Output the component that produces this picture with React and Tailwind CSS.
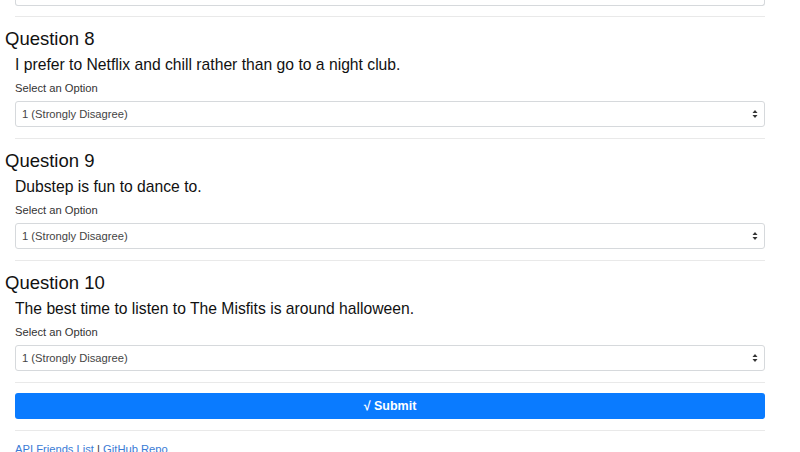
import { useState } from 'react';

const questions = [
  { n: 8, text: 'I prefer to Netflix and chill rather than go to a night club.' },
  { n: 9, text: 'Dubstep is fun to dance to.' },
  { n: 10, text: 'The best time to listen to The Misfits is around halloween.' },
];

function Arrows() {
  return (
    <svg width="6" height="10" viewBox="0 0 6 10" className="shrink-0">
      <path d="M3 1 L5.5 4 L0.5 4 Z" fill="#333" />
      <path d="M3 9 L5.5 6 L0.5 6 Z" fill="#333" />
    </svg>
  );
}

function Question({ q, value, onChange }) {
  return (
    <div>
      <div className="mx-[15px] h-px bg-[#e9e9e9]" />
      <div className="mt-[10px] pl-[5px] text-[18.5px] leading-[24px] text-[#111]">Question {q.n}</div>
      <div className="px-[15px]">
        <div className="mt-[4px] text-[15.7px] leading-[20px] text-[#111]">{q.text}</div>
        <div className="mt-[6px] text-[11.2px] leading-[14px] text-[#333]">Select an Option</div>
        <label className="relative mt-[6px] flex h-[26px] items-center rounded-[3px] border border-[#d6d9dc] bg-white pl-[6px] pr-[6px]">
          <span className="flex-1 text-[11.2px] text-[#444]">{value}</span>
          <Arrows />
          <select value={value} onChange={e => onChange(e.target.value)} className="absolute inset-0 opacity-0">
            <option>1 (Strongly Disagree)</option>
            <option>2</option>
            <option>3</option>
            <option>4</option>
            <option>5 (Strongly Agree)</option>
          </select>
        </label>
      </div>
      <div className="h-[11px]" />
    </div>
  );
}

export default function App() {
  const [answers, setAnswers] = useState({});
  return (
    <div className="h-[452px] w-[800px] overflow-hidden bg-white font-['Liberation_Sans',Arial,sans-serif]">
      <div className="w-[780px]">
        <div className="mx-[15px] h-[6px] rounded-b-[3px] border border-t-0 border-[#d6d9dc]" />
        <div className="h-[10px]" />
        {questions.map(q => (
          <Question key={q.n} q={q} value={answers[q.n] || '1 (Strongly Disagree)'}
            onChange={v => setAnswers(a => ({ ...a, [q.n]: v }))} />
        ))}
        <div className="px-[15px]">
          <div className="h-px bg-[#e9e9e9]" />
          <button className="mt-[10px] flex h-[26px] w-full items-center justify-center rounded-[3px] bg-[#0a7bff] text-[12.5px] font-bold text-white">
            √ Submit
          </button>
          <div className="mt-[11px] h-px bg-[#e9e9e9]" />
          <div className="mt-[11px] text-[11.2px] leading-[14px] text-[#3a7bd5]">
            <a href="#">API Friends List</a> <span className="text-[#333]">|</span> <a href="#">GitHub Repo</a>
          </div>
        </div>
      </div>
    </div>
  );
}
